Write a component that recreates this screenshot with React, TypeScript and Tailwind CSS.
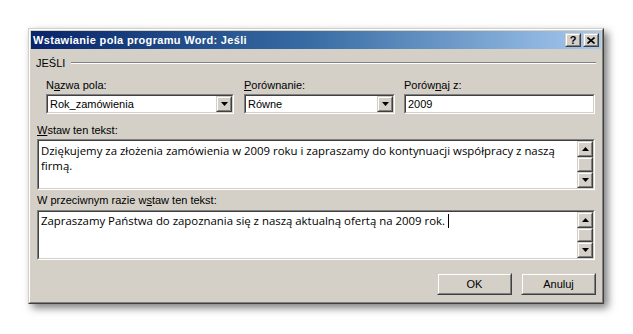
import React from "react";

const UI = { fontFamily: '"Liberation Sans", Arial, sans-serif' };
const TXT = { fontFamily: '"Open Sans", "Noto Sans", sans-serif' };

function Raised({ className = "", children }: { className?: string; children?: React.ReactNode }) {
  return (
    <div className={`border border-t-[#d4d0c8] border-l-[#d4d0c8] border-r-[#404040] border-b-[#404040] ${className}`}>
      <div className="w-full h-full border border-t-white border-l-white border-r-[#808080] border-b-[#808080] bg-[#d4d0c8] flex items-center justify-center">
        {children}
      </div>
    </div>
  );
}

function Sunken({ className = "", children }: { className?: string; children?: React.ReactNode }) {
  return (
    <div className={`border border-t-[#808080] border-l-[#808080] border-r-white border-b-white ${className}`}>
      <div className="w-full h-full border border-t-[#404040] border-l-[#404040] border-r-[#d4d0c8] border-b-[#d4d0c8] bg-white flex">
        {children}
      </div>
    </div>
  );
}

function Arrow({ up = false }: { up?: boolean }) {
  return (
    <svg width="7" height="4" viewBox="0 0 7 4" className="block">
      {up ? <path d="M3.5 0 L7 4 L0 4 Z" fill="#000" /> : <path d="M0 0 L7 0 L3.5 4 Z" fill="#000" />}
    </svg>
  );
}

function Combo({ value, className = "" }: { value: string; className?: string }) {
  return (
    <Sunken className={`h-[20px] ${className}`}>
      <div className="flex-1 flex items-center pl-[2px] text-[11px] text-black leading-[14px]" style={UI}>
        {value}
      </div>
      <Raised className="w-[16px] h-full">
        <Arrow />
      </Raised>
    </Sunken>
  );
}

function ScrollBar() {
  return (
    <div className="w-[16px] h-full flex flex-col">
      <Raised className="w-[16px] h-[16px]">
        <Arrow up />
      </Raised>
      <Raised className="w-[16px] flex-1" />
      <Raised className="w-[16px] h-[16px]">
        <Arrow />
      </Raised>
    </div>
  );
}

export default function App() {
  return (
    <div className="w-[633px] h-[334px] bg-white overflow-hidden pt-[28px] pl-[28px]">
      <div
        className="w-[576px] h-[276px] border border-t-[#d4d0c8] border-l-[#d4d0c8] border-r-[#404040] border-b-[#404040] shadow-[4px_4px_8px_rgba(0,0,0,0.5)]"
      >
        <div className="w-full h-full border border-t-white border-l-white border-r-[#808080] border-b-[#808080] bg-[#d4d0c8] p-[1px] flex flex-col">
          {/* Title bar */}
          <div className="h-[18px] bg-gradient-to-r from-[#0a246a] via-[#3a6ea5] to-[#a6caf0] flex items-center pl-[2px] pr-[2px]">
            <div className="flex-1 text-white font-bold text-[11px] tracking-[0.33px] leading-[14px] whitespace-nowrap" style={UI}>
              Wstawianie pola programu Word: Jeśli
            </div>
            <div className="flex items-center">
              <Raised className="w-[16px] h-[14px]">
                <span className="text-[11px] font-bold leading-[10px] text-black" style={UI}>?</span>
              </Raised>
              <Raised className="w-[16px] h-[14px] ml-[2px]">
                <svg width="8" height="7" viewBox="0 0 8 7" className="block">
                  <path d="M0.5 0.5 L7.5 6.5 M7.5 0.5 L0.5 6.5" stroke="#000" strokeWidth="1.6" />
                </svg>
              </Raised>
            </div>
          </div>

          {/* Body */}
          <div className="flex flex-col pl-[5px] pr-[5px] text-[11px] leading-[14px] text-black" style={UI}>
            {/* Group header */}
            <div className="mt-[7px] h-[14px] flex items-center">
              <span className="whitespace-nowrap">JEŚLI</span>
              <div className="flex-1 ml-[6px] h-[2px] border-t border-t-[#808080] border-b border-b-white" />
            </div>

            {/* Labels */}
            <div className="mt-[8px] h-[14px] flex ml-[10px]">
              <div className="w-[198px]">N<span className="underline">a</span>zwa pola:</div>
              <div className="w-[160px]"><span className="underline">P</span>orównanie:</div>
              <div>Porów<span className="underline">n</span>aj z:</div>
            </div>

            {/* Inputs */}
            <div className="mt-[2px] flex ml-[10px]">
              <Combo value="Rok_zamówienia" className="w-[188px]" />
              <Combo value="Równe" className="w-[151px] ml-[10px]" />
              <Sunken className="w-[191px] h-[20px] ml-[9px]">
                <div className="flex-1 flex items-center pl-[2px]">2009</div>
              </Sunken>
            </div>

            {/* Textarea 1 */}
            <div className="mt-[9px] h-[14px] ml-[1px]">
              <span className="underline">W</span>staw ten tekst:
            </div>
            <Sunken className="mt-[2px] ml-[1px] w-[558px] h-[51px]">
              <div className="flex-1 pl-[2px] pt-[2px] text-[11.4px] leading-[15px] text-black" style={TXT}>
                Dziękujemy za złożenia zamówienia w 2009 roku i zapraszamy do kontynuacji współpracy z naszą
                <br />
                firmą.
              </div>
              <ScrollBar />
            </Sunken>

            {/* Textarea 2 */}
            <div className="mt-[3px] h-[14px] ml-[1px]">
              W przeciwnym razie w<span className="underline">s</span>taw ten tekst:
            </div>
            <Sunken className="mt-[3px] ml-[1px] w-[558px] h-[50px]">
              <div className="flex-1 pl-[2px] pt-[1px] text-[11.4px] leading-[15px] text-black flex items-start" style={TXT}>
                <span className="whitespace-nowrap">Zapraszamy Państwa do zapoznania się z naszą aktualną ofertą na 2009 rok.&nbsp;</span>
                <span className="inline-block w-[1px] h-[14px] bg-black mt-[1px]" />
              </div>
              <ScrollBar />
            </Sunken>

            {/* Buttons */}
            <div className="mt-[13px] flex justify-end">
              <Raised className="w-[75px] h-[22px]">
                <span>OK</span>
              </Raised>
              <Raised className="w-[75px] h-[22px] ml-[9px]">
                <span>Anuluj</span>
              </Raised>
            </div>
          </div>
        </div>
      </div>
    </div>
  );
}
